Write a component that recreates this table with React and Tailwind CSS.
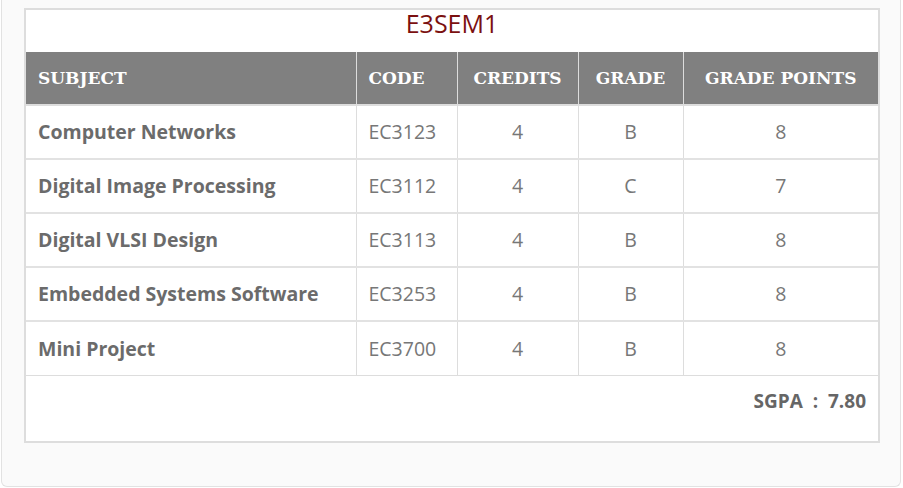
import React from "react";

const rows = [
  { subject: "Computer Networks", code: "EC3123", credits: 4, grade: "B", points: 8 },
  { subject: "Digital Image Processing", code: "EC3112", credits: 4, grade: "C", points: 7 },
  { subject: "Digital VLSI Design", code: "EC3113", credits: 4, grade: "B", points: 8 },
  { subject: "Embedded Systems Software", code: "EC3253", credits: 4, grade: "B", points: 8 },
  { subject: "Mini Project", code: "EC3700", credits: 4, grade: "B", points: 8 },
];

export default function App() {
  return (
    <div className="w-[903px] h-[488px] bg-white font-['Open_Sans',sans-serif] overflow-hidden">
      {/* ===== CARD ===== */}
      <div className="ml-px w-[900px] h-[487px] bg-[#fafafa] border-x border-b border-[#e2e2e2] rounded-b-md pt-[8px] pl-[22px] pr-[20px]">
        <div className="bg-white border-2 border-[#dddddd]">
          <div className="h-[42px] pt-[1px] leading-[24px] text-center text-[25px] text-[#7b1010]">
            E3SEM1
          </div>

          <table className="w-full table-fixed border-collapse">
            <colgroup>
              <col className="w-[330px]" />
              <col className="w-[101px]" />
              <col className="w-[121px]" />
              <col className="w-[105px]" />
              <col className="w-[195px]" />
            </colgroup>
            <thead>
              <tr className="h-[53px] bg-[#808080] text-white font-['DejaVu_Serif',serif] font-bold text-[17px] border-b-2 border-[#dddddd]">
                <th className="text-left pl-3 pt-[2px] font-bold">SUBJECT</th>
                <th className="text-left pl-3 pt-[2px] font-bold border-l border-[#dddddd]">CODE</th>
                <th className="text-center pt-[2px] font-bold border-l border-[#dddddd]">CREDITS</th>
                <th className="text-center pt-[2px] font-bold border-l border-[#dddddd]">GRADE</th>
                <th className="text-center pt-[2px] font-bold border-l border-[#dddddd]">GRADE POINTS</th>
              </tr>
            </thead>
            <tbody>
              {rows.map((r, i) => (
                <tr
                  key={r.code}
                  className={`h-[54px] text-[19.5px] text-[#777777] ${
                    i < rows.length - 1 ? "border-b-2 border-[#e2e2e2]" : "border-b border-[#dddddd]"
                  }`}
                >
                  <td className="pl-3 font-bold text-[#6b6b6b]">{r.subject}</td>
                  <td className="pl-3 border-l border-[#dddddd]">{r.code}</td>
                  <td className="text-center border-l border-[#dddddd]">{r.credits}</td>
                  <td className="text-center border-l border-[#dddddd]">{r.grade}</td>
                  <td className="text-center border-l border-[#dddddd]">{r.points}</td>
                </tr>
              ))}
            </tbody>
          </table>

          {/* ===== SGPA ===== */}
          <div className="h-[65px] flex items-start justify-end pt-[11px] pr-[12px] text-[19px] font-bold text-[#666666]">
            SGPA &nbsp;:&nbsp; 7.80
          </div>
        </div>
      </div>
    </div>
  );
}
